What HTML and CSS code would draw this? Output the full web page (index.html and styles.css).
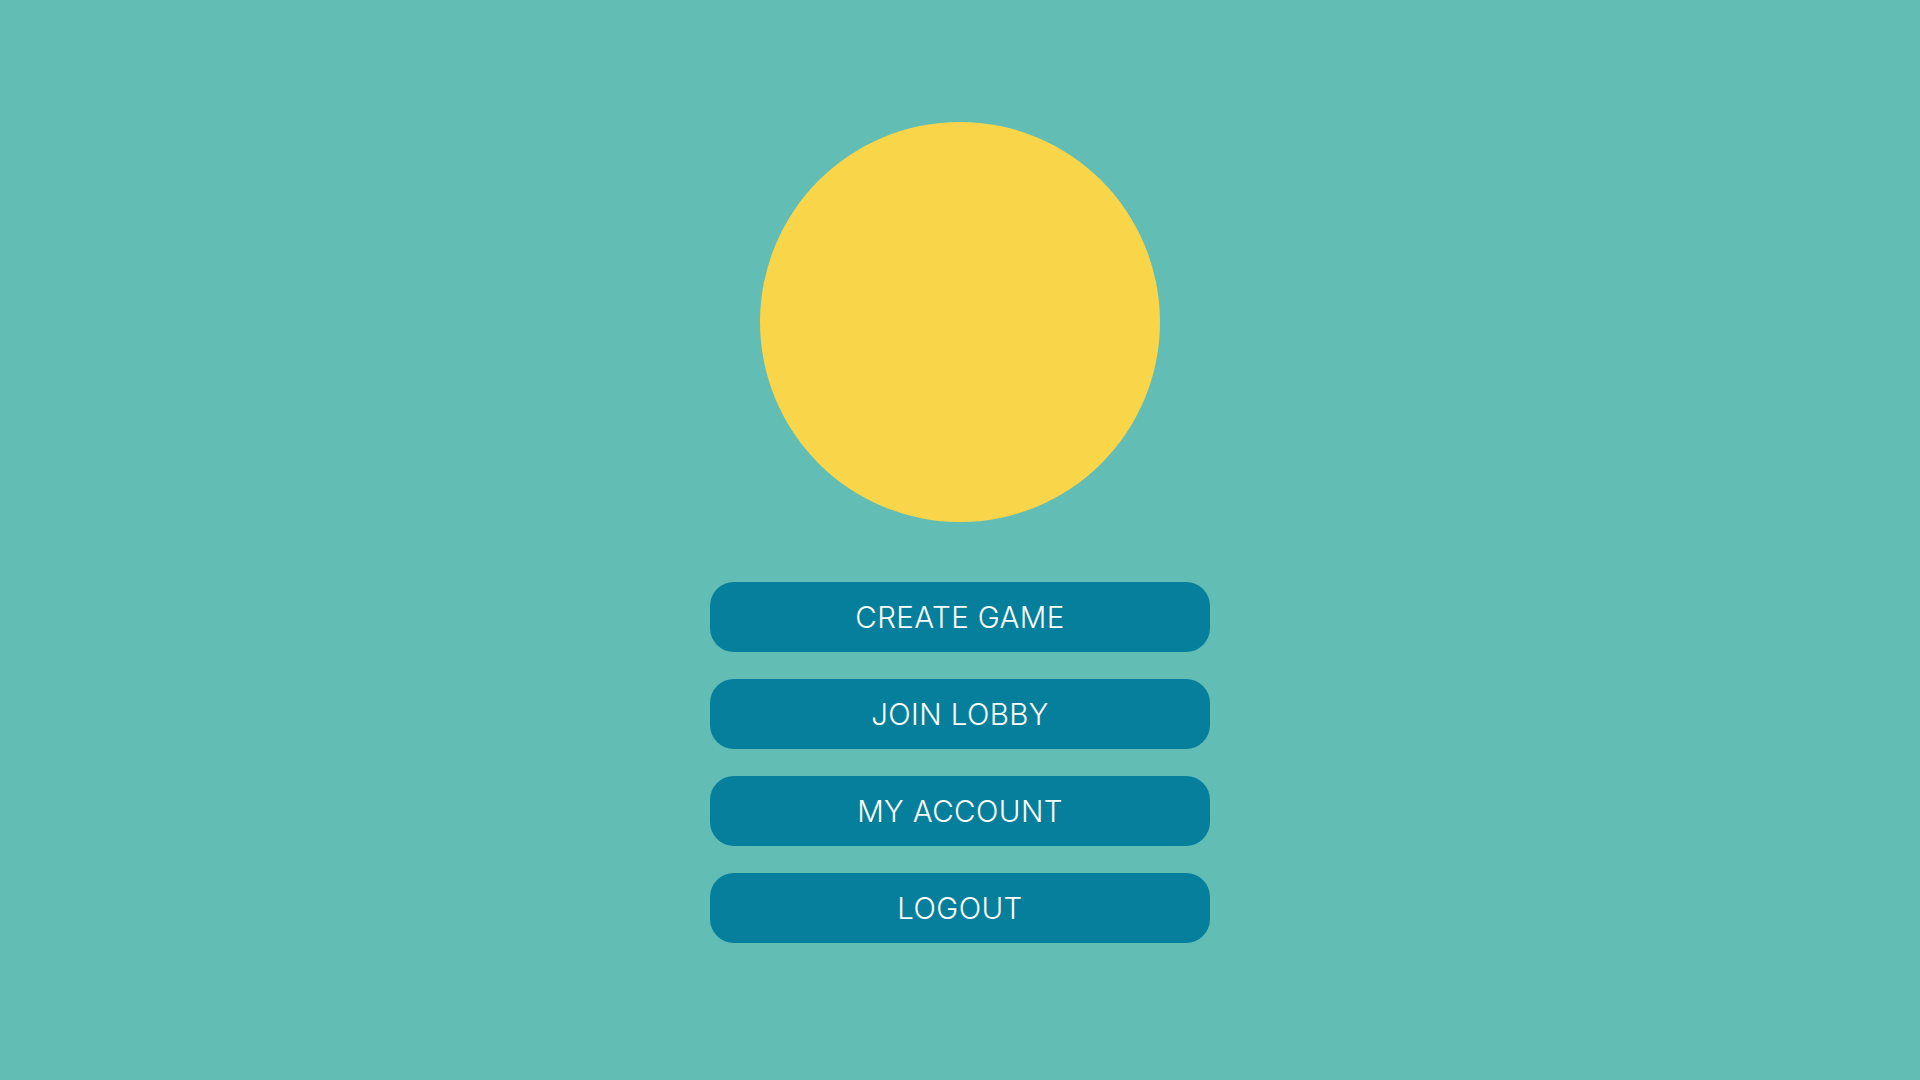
FILE: index.html
```html
<!DOCTYPE html>
<html>
<head>
<meta charset="utf-8">
<link rel="stylesheet" href="styles.css">
</head>
<body>
<main class="menu">
  <div class="sun"></div>
  <nav class="buttons">
    <button class="btn">CREATE GAME</button>
    <button class="btn">JOIN LOBBY</button>
    <button class="btn">MY ACCOUNT</button>
    <button class="btn">LOGOUT</button>
  </nav>
</main>
</body>
</html>
```
FILE: styles.css
```css
html, body {
  margin: 0;
  padding: 0;
  width: 1920px;
  height: 1080px;
  background: #62bdb4;
  overflow: hidden;
}
.menu {
  display: flex;
  flex-direction: column;
  align-items: center;
  padding-top: 122px;
}
.sun {
  width: 400px;
  height: 400px;
  border-radius: 50%;
  background: #f9d54a;
}
.buttons {
  margin-top: 60px;
  display: flex;
  flex-direction: column;
  gap: 27px;
}
.btn {
  width: 500px;
  height: 70px;
  border: none;
  border-radius: 24px;
  background: #057f9b;
  color: #ffffff;
  font-family: "Inter", "Liberation Sans", sans-serif;
  font-size: 29.5px;
  font-weight: 300;
  letter-spacing: 0.4px;
  padding: 0;
  cursor: pointer;
}
```
